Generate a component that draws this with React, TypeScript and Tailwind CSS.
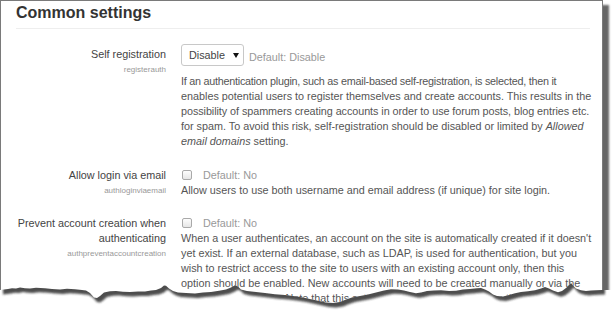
import React from "react";

const tear: [number, number][] = [
  [0, 290], [4, 289.5], [8, 289], [12, 288.2], [16, 288.6], [20, 287.5], [25, 288.3], [30, 288.6], [36, 287.8], [45, 288.2],
  [52, 289], [60, 289.5], [67, 288.8], [75, 289.2], [82, 290], [86, 290.5], [90, 293], [94, 297.5], [97, 298], [100, 296],
  [104, 292.5], [110, 291.3], [116, 291], [123, 291.8], [130, 292], [138, 291.4], [145, 291.6], [151, 290.6], [156, 290],
  [161, 288], [164, 285.5], [166, 285.8], [169, 288.6], [173, 291], [178, 292.6], [186, 293], [195, 293.4], [203, 292.6],
  [211, 292], [219, 290.8], [226, 289.6], [231, 287.6], [235, 285.2], [238, 286.5], [241, 289.4], [247, 291], [256, 292],
  [265, 293], [275, 294.2], [285, 295], [295, 296.2], [303, 297.6], [311, 299.2], [318, 300.8], [326, 302.4], [333, 303],
  [340, 302], [346, 299.6], [352, 297.6], [360, 296], [368, 294.4], [376, 292.6], [384, 290.4], [391, 289.2], [398, 289.6],
  [404, 290.6], [410, 292], [416, 293.2], [421, 292.4], [427, 291], [434, 290.4], [441, 290.2], [449, 291], [456, 290.8],
  [463, 289.6], [470, 289], [477, 288.2], [481, 288], [485, 289.4], [489, 291.6], [493, 294.4], [497, 296], [503, 296.4],
  [509, 295], [515, 293.2], [521, 292], [528, 291.2], [535, 290.2], [541, 288.4], [545, 287], [549, 288.4], [553, 290.4],
  [558, 292.2], [562, 291], [566, 288], [569, 285], [571, 283], [573, 285.4], [576, 288.4], [581, 290.2], [586, 291],
  [591, 290.4], [596, 290.2], [602, 290],
];

const tearStr = tear.map(([x, y]) => `${x},${y}`).join(" ");
const belowPoly = `${tearStr} 615,290 615,319 0,319`;
const paperPoly = `0,240 ${tearStr} 602,240`;

function Checkbox() {
  return (
    <div className="ml-[1px] h-[10px] w-[10px] rounded-[2px] border border-[#a9a9a9] bg-gradient-to-b from-[#fdfdfd] to-[#e6e6e6]" />
  );
}

export default function App() {
  return (
    <div className="relative h-[319px] w-[615px] overflow-hidden bg-white font-['Liberation_Sans',Arial,sans-serif]">
      <div className="h-[312px] w-[603px] border-l border-r border-t border-[#7a7a7a] bg-white pl-[15px] pr-[12px] pt-[2px] shadow-[6px_5px_2px_rgba(0,0,0,0.6)]">
        <h3 className="border-b border-[#eeeeee] pb-[5px] text-[16px] font-bold leading-[20px] text-[#333]">
          Common settings
        </h3>

        {/* Row 1 */}
        <div className="mt-[15px] flex">
          <div className="w-[150px] shrink-0 pt-[3px] text-right">
            <div className="text-[10.8px] leading-[15px] text-[#444]">Self registration</div>
            <div className="text-[8px] leading-[15px] text-[#999]">registerauth</div>
          </div>
          <div className="ml-[15px] whitespace-nowrap text-[10.8px] leading-[15px] text-[#555]">
            <div className="flex items-center">
              <div className="flex h-[22px] w-[63px] items-center justify-between rounded-[3px] border border-[#c8c8c8] bg-white pl-[7px] pr-[4px] text-[#444]">
                <span>Disable</span>
                <svg width="6" height="5" viewBox="0 0 6 5">
                  <polygon points="0,0 6,0 3,5" fill="#111" />
                </svg>
              </div>
              <span className="ml-[5px] mt-[4px] text-[#999]">Default: Disable</span>
            </div>
            <div className="mt-[7.5px]">
              <div className="tracking-[-0.25px]">
                If an authentication plugin, such as email-based self-registration, is selected, then it
              </div>
              <div>enables potential users to register themselves and create accounts. This results in the</div>
              <div className="tracking-[-0.06px]">
                possibility of spammers creating accounts in order to use forum posts, blog entries etc.
              </div>
              <div>
                for spam. To avoid this risk, self-registration should be disabled or limited by <i>Allowed</i>
              </div>
              <div>
                <i>email domains</i> setting.
              </div>
            </div>
          </div>
        </div>

        {/* Row 2 */}
        <div className="mt-[19px] flex">
          <div className="w-[150px] shrink-0 text-right">
            <div className="text-[10.8px] leading-[15px] text-[#444]">Allow login via email</div>
            <div className="text-[8px] leading-[15px] text-[#999]">authloginviaemail</div>
          </div>
          <div className="ml-[15px] whitespace-nowrap text-[10.8px] leading-[15px] text-[#555]">
            <div className="flex h-[15px] items-center">
              <Checkbox />
              <span className="ml-[11px] text-[#999]">Default: No</span>
            </div>
            <div>Allow users to use both username and email address (if unique) for site login.</div>
          </div>
        </div>

        {/* Row 3 */}
        <div className="mt-[18px] flex">
          <div className="w-[150px] shrink-0 text-right">
            <div className="text-[10.8px] leading-[15px] text-[#444]">
              Prevent account creation when
              <br />
              authenticating
            </div>
            <div className="text-[8px] leading-[15px] text-[#999]">authpreventaccountcreation</div>
          </div>
          <div className="ml-[15px] whitespace-nowrap text-[10.8px] leading-[15px] text-[#555]">
            <div className="flex h-[15px] items-center">
              <Checkbox />
              <span className="ml-[11px] text-[#999]">Default: No</span>
            </div>
            <div>When a user authenticates, an account on the site is automatically created if it doesn't</div>
            <div>yet exist. If an external database, such as LDAP, is used for authentication, but you</div>
            <div>wish to restrict access to the site to users with an existing account only, then this</div>
            <div>option should be enabled. New accounts will need to be created manually or via the</div>
            <div>upload users feature. Note that this setting doesn't apply to MNet authentication.</div>
          </div>
        </div>
      </div>

      {/* torn paper edge */}
      <svg className="pointer-events-none absolute left-0 top-0" width="615" height="319" viewBox="0 0 615 319">
        <defs>
          <clipPath id="below">
            <polygon points={belowPoly} />
          </clipPath>
          <filter id="blur" x="-10%" y="-50%" width="120%" height="200%">
            <feGaussianBlur stdDeviation="1.3" />
          </filter>
        </defs>
        <polygon points={belowPoly} fill="#ffffff" />
        <g clipPath="url(#below)">
          <polygon points={paperPoly} transform="translate(3,4.5)" fill="#2e2e2e" opacity="0.85" filter="url(#blur)" />
        </g>
      </svg>
    </div>
  );
}
